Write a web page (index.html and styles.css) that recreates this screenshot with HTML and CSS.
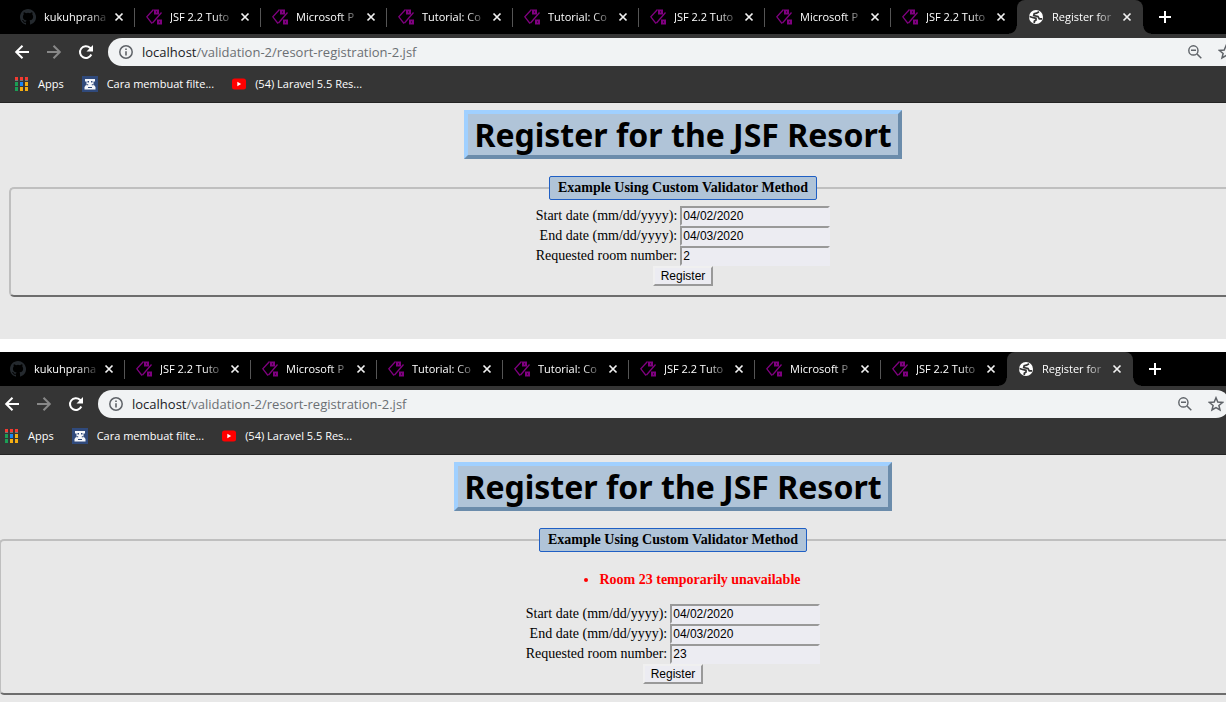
FILE: index.html
```html
<!DOCTYPE html>
<html lang="en">
<head>
<meta charset="utf-8">
<title>Register for the JSF Resort</title>
<link rel="stylesheet" href="styles.css">
</head>
<body>
<svg class="sprite" aria-hidden="true">
  <symbol id="github" viewBox="0 0 16 16"><path fill="#24292e" d="M8 0C3.58 0 0 3.58 0 8c0 3.54 2.29 6.53 5.47 7.59.4.07.55-.17.55-.38v-1.49c-2.01.37-2.53-.49-2.69-.94-.09-.23-.48-.94-.82-1.13-.28-.15-.68-.52-.01-.53.63-.01 1.08.58 1.23.82.72 1.21 1.87.87 2.33.66.07-.52.28-.87.51-1.07-1.78-.2-3.64-.89-3.64-3.95 0-.87.31-1.59.82-2.15-.08-.2-.36-1.02.08-2.12 0 0 .67-.21 2.2.82a7.5 7.5 0 0 1 4 0c1.53-1.04 2.2-.82 2.2-.82.44 1.1.16 1.92.08 2.12.51.56.82 1.27.82 2.15 0 3.07-1.87 3.75-3.65 3.95.29.25.54.73.54 1.48v2.2c0 .21.15.46.55.38A8 8 0 0 0 8 0z"/></symbol>
  <symbol id="code" viewBox="0 0 16 16"><g fill="none" stroke="#800080"><path stroke-width="1.300" d="M7.500 .5L.8 7.800L6 14.500M15.500 3.500L6.500 14"/><path stroke-width="2" d="M9 1.500h3v3H9zM12 11.500h3v3h-3z"/></g></symbol>
  <symbol id="globe" viewBox="0 0 16 16"><circle cx="8" cy="8" r="7" fill="#fff"/><path fill="none" stroke="#353535" stroke-width="1.700" d="M11 2.800L8.500 4.200 6.200 4.700 5.700 6.700 10 7.500 11.300 9.800H14M1.500 7.500L4.500 8.500 8 9.300V11L6.300 12.200V14"/></symbol>
  <symbol id="close" viewBox="0 0 10 10"><path d="M1.500 1.500l7 7m0-7l-7 7" fill="none" stroke="#f1f1f1" stroke-width="1.700"/></symbol>
  <symbol id="plus" viewBox="0 0 12 12"><path d="M6 0v12M0 6h12" fill="none" stroke="#fff" stroke-width="2"/></symbol>
  <symbol id="arrow" viewBox="0 0 16 16"><path d="M15 8H2.500M8.500 1.700L2.200 8l6.300 6.300" fill="none" stroke="currentColor" stroke-width="2"/></symbol>
  <symbol id="reload" viewBox="0 0 16 16"><path d="M13.300 10.500A5.900 5.900 0 1 1 12 3.800L13.500 5.300" fill="none" stroke="#fff" stroke-width="2"/><path d="M15 1v6.500H8.500z" fill="#fff"/></symbol>
  <symbol id="info" viewBox="0 0 14 14"><circle cx="7" cy="7" r="6.200" fill="none" stroke="#5f6368" stroke-width="1.500"/><path d="M6.200 6.200h1.600v4.300H6.200zM6.200 3.500h1.600v1.600H6.200z" fill="#5f6368"/></symbol>
  <symbol id="zoomout" viewBox="0 0 14 14"><path d="M9 9l4.300 4.300M3 5.300h5" fill="none" stroke="#5f6368" stroke-width="1.500"/><circle cx="5.400" cy="5.400" r="4.600" fill="none" stroke="#5f6368" stroke-width="1.400"/></symbol>
  <symbol id="star" viewBox="0 0 16 16"><path d="M8 1.800l1.800 4.300 4.700.4-3.600 3 1.100 4.500L8 11.600 4 14l1.100-4.500-3.600-3 4.700-.4z" fill="none" stroke="#5f6368" stroke-width="1.500"/></symbol>
  <symbol id="apps" viewBox="0 0 14 14"><path fill="#f33b31" d="M0 0h3v3H0zM5 0h3v3H5zM10 0h3v3h-3z"/><path fill="#777" d="M0 3h3v1H0zM5 3h3v1H5zM10 3h3v1h-3z"/><path fill="#1b9e55" d="M0 5h3v4H0zM0 10h3v4H0z"/><path fill="#1a86f5" d="M5 5h3v4H5z"/><path fill="#f5ae12" d="M10 5h3v4h-3zM5 10h3v4H5zM10 10h3v4h-3z"/></symbol>
  <symbol id="tower" viewBox="0 0 16 16"><path fill="#304a7c" d="M0 0h16v16H0z"/><path fill="#f4f6fa" d="M3 3h10v2.500h-1.500V9H12l1.500 2v2.500h-11V11L4 9h.5V5.500H3z"/><path fill="#304a7c" d="M5.500 5h1.500v1.500H5.500zM9 5h1.500v1.500H9zM4.500 8.300h1.700v1H4.500zM9.800 8.300h1.700v1H9.800zM6 11h4v1H6z"/></symbol>
  <symbol id="video" viewBox="0 0 14 12"><rect width="14" height="11" y=".500" rx="2.500" fill="#f00"/><path fill="#fff" d="M5.300 3.800L9.200 6 5.300 8.200z"/></symbol>
</svg>

<section class="window">
  <nav class="tabs">
    <div class="tab"><svg class="fav"><use href="#github"/></svg><span class="name">kukuhprana</span><button class="shut" aria-label="Close tab"><svg><use href="#close"/></svg></button></div>
    <div class="tab"><svg class="fav"><use href="#code"/></svg><span class="name">JSF 2.2 Tuto</span><button class="shut" aria-label="Close tab"><svg><use href="#close"/></svg></button></div>
    <div class="tab"><svg class="fav"><use href="#code"/></svg><span class="name">Microsoft P</span><button class="shut" aria-label="Close tab"><svg><use href="#close"/></svg></button></div>
    <div class="tab"><svg class="fav"><use href="#code"/></svg><span class="name">Tutorial: Co</span><button class="shut" aria-label="Close tab"><svg><use href="#close"/></svg></button></div>
    <div class="tab"><svg class="fav"><use href="#code"/></svg><span class="name">Tutorial: Co</span><button class="shut" aria-label="Close tab"><svg><use href="#close"/></svg></button></div>
    <div class="tab"><svg class="fav"><use href="#code"/></svg><span class="name">JSF 2.2 Tuto</span><button class="shut" aria-label="Close tab"><svg><use href="#close"/></svg></button></div>
    <div class="tab"><svg class="fav"><use href="#code"/></svg><span class="name">Microsoft P</span><button class="shut" aria-label="Close tab"><svg><use href="#close"/></svg></button></div>
    <div class="tab last"><svg class="fav"><use href="#code"/></svg><span class="name">JSF 2.2 Tuto</span><button class="shut" aria-label="Close tab"><svg><use href="#close"/></svg></button></div>
    <div class="tab active"><svg class="fav"><use href="#globe"/></svg><span class="name">Register for</span><button class="shut" aria-label="Close tab"><svg><use href="#close"/></svg></button></div>
    <button class="new-tab" aria-label="New tab"><svg><use href="#plus"/></svg></button>
  </nav>
  <div class="toolbar">
    <button class="tool" aria-label="Back"><svg><use href="#arrow"/></svg></button>
    <button class="tool forward" aria-label="Forward"><svg><use href="#arrow"/></svg></button>
    <button class="tool" aria-label="Reload"><svg><use href="#reload"/></svg></button>
    <div class="address"><svg class="info"><use href="#info"/></svg><span class="url"><span class="host">localhost</span>/validation-2/resort-registration-2.jsf</span><button class="action" aria-label="Zoom"><svg class="lens"><use href="#zoomout"/></svg></button><button class="action" aria-label="Bookmark"><svg><use href="#star"/></svg></button></div>
  </div>
  <nav class="bookmarks">
    <a href="#"><svg class="apps"><use href="#apps"/></svg>Apps</a>
    <a href="#"><svg><use href="#tower"/></svg>Cara membuat filte...</a>
    <a href="#"><svg class="video"><use href="#video"/></svg>(54) Laravel 5.5 Res...</a>
  </nav>
  <main class="page">
    <h1>Register for the JSF Resort</h1>
    <fieldset>
      <legend>Example Using Custom Validator Method</legend>
      <form>
        <div class="fields">
          <label for="start1">Start date (mm/dd/yyyy):</label><input id="start1" type="text" value="04/02/2020">
          <label for="end1">End date (mm/dd/yyyy):</label><input id="end1" type="text" value="04/03/2020">
          <label for="room1">Requested room number:</label><input id="room1" type="text" value="2">
        </div>
        <button class="register" type="button">Register</button>
      </form>
    </fieldset>
  </main>
</section>

<section class="window second">
  <nav class="tabs">
    <div class="tab"><svg class="fav"><use href="#github"/></svg><span class="name">kukuhprana</span><button class="shut" aria-label="Close tab"><svg><use href="#close"/></svg></button></div>
    <div class="tab"><svg class="fav"><use href="#code"/></svg><span class="name">JSF 2.2 Tuto</span><button class="shut" aria-label="Close tab"><svg><use href="#close"/></svg></button></div>
    <div class="tab"><svg class="fav"><use href="#code"/></svg><span class="name">Microsoft P</span><button class="shut" aria-label="Close tab"><svg><use href="#close"/></svg></button></div>
    <div class="tab"><svg class="fav"><use href="#code"/></svg><span class="name">Tutorial: Co</span><button class="shut" aria-label="Close tab"><svg><use href="#close"/></svg></button></div>
    <div class="tab"><svg class="fav"><use href="#code"/></svg><span class="name">Tutorial: Co</span><button class="shut" aria-label="Close tab"><svg><use href="#close"/></svg></button></div>
    <div class="tab"><svg class="fav"><use href="#code"/></svg><span class="name">JSF 2.2 Tuto</span><button class="shut" aria-label="Close tab"><svg><use href="#close"/></svg></button></div>
    <div class="tab"><svg class="fav"><use href="#code"/></svg><span class="name">Microsoft P</span><button class="shut" aria-label="Close tab"><svg><use href="#close"/></svg></button></div>
    <div class="tab last"><svg class="fav"><use href="#code"/></svg><span class="name">JSF 2.2 Tuto</span><button class="shut" aria-label="Close tab"><svg><use href="#close"/></svg></button></div>
    <div class="tab active"><svg class="fav"><use href="#globe"/></svg><span class="name">Register for</span><button class="shut" aria-label="Close tab"><svg><use href="#close"/></svg></button></div>
    <button class="new-tab" aria-label="New tab"><svg><use href="#plus"/></svg></button>
  </nav>
  <div class="toolbar">
    <button class="tool" aria-label="Back"><svg><use href="#arrow"/></svg></button>
    <button class="tool forward" aria-label="Forward"><svg><use href="#arrow"/></svg></button>
    <button class="tool" aria-label="Reload"><svg><use href="#reload"/></svg></button>
    <div class="address"><svg class="info"><use href="#info"/></svg><span class="url"><span class="host">localhost</span>/validation-2/resort-registration-2.jsf</span><button class="action" aria-label="Zoom"><svg class="lens"><use href="#zoomout"/></svg></button><button class="action" aria-label="Bookmark"><svg><use href="#star"/></svg></button></div>
  </div>
  <nav class="bookmarks">
    <a href="#"><svg class="apps"><use href="#apps"/></svg>Apps</a>
    <a href="#"><svg><use href="#tower"/></svg>Cara membuat filte...</a>
    <a href="#"><svg class="video"><use href="#video"/></svg>(54) Laravel 5.5 Res...</a>
  </nav>
  <main class="page">
    <h1>Register for the JSF Resort</h1>
    <fieldset>
      <legend>Example Using Custom Validator Method</legend>
      <form>
        <ul class="messages"><li>Room 23 temporarily unavailable</li></ul>
        <div class="fields">
          <label for="start2">Start date (mm/dd/yyyy):</label><input id="start2" type="text" value="04/02/2020">
          <label for="end2">End date (mm/dd/yyyy):</label><input id="end2" type="text" value="04/03/2020">
          <label for="room2">Requested room number:</label><input id="room2" type="text" value="23">
        </div>
        <button class="register" type="button">Register</button>
      </form>
    </fieldset>
  </main>
</section>
</body>
</html>
```
FILE: styles.css
```css
* { box-sizing: border-box; }

body {
  margin: 0;
  overflow: hidden;
  background: #fff;
  font: 11px/16px "Open Sans", sans-serif;
}

.sprite { display: none; }

svg { display: block; flex: none; width: 16px; height: 16px; }

button { padding: 0; border: 0; background: none; flex: none; }

/* Each window runs past the right edge of the view. */
.window { width: calc(100% + 140px); margin-bottom: 13px; }
.second { margin-left: -10px; margin-bottom: 0; }

.tabs {
  display: flex;
  align-items: stretch;
  height: 34px;
  padding-left: 9px;
  background: #000;
}

.tab {
  position: relative;
  display: flex;
  align-items: center;
  flex: none;
  width: 126px;
  padding: 0 9px 0 11px;
  color: #fff;
}

.tab::after {
  content: "";
  position: absolute;
  right: 0;
  top: 8px;
  width: 1px;
  height: 19px;
  background: #555;
}

.last::after { display: none; }

/* Tab titles fade out before the close button. */
.name {
  width: 62px;
  margin-left: 8px;
  white-space: nowrap;
  -webkit-mask-image: linear-gradient(to right, #000 44px, transparent 66px);
  mask-image: linear-gradient(to right, #000 44px, transparent 66px);
}

.shut { margin-left: 8px; }
.shut svg { width: 10px; height: 10px; }

.active { background: #353535; border-radius: 8px 8px 0 0; }

.active::before,
.active::after {
  content: "";
  position: absolute;
  top: auto;
  bottom: 0;
  width: 8px;
  height: 8px;
}

.active::before { left: -8px; background: radial-gradient(circle at 0 0, #000 7px, #353535 8px); }
.active::after { right: -8px; background: radial-gradient(circle at 100% 0, #000 7px, #353535 8px); }

.new-tab { margin-left: 16px; }
.new-tab svg { width: 12px; height: 12px; }

.toolbar {
  display: flex;
  align-items: center;
  gap: 16px;
  height: 36px;
  padding: 0 62px 0 14px;
  background: #353535;
}

.tool { color: #fff; }
.forward { color: #888; }
.forward svg { transform: rotate(180deg); }

.address {
  display: flex;
  align-items: center;
  flex: 1;
  height: 28px;
  margin-left: -2px;
  padding: 0 70px 0 11px;
  border-radius: 14px;
  background: #f1f3f4;
}

.second .toolbar { padding-right: 126px; }
.second .address { padding-right: 6px; }

.info { width: 14px; height: 14px; }

.url {
  flex: 1;
  margin-left: 9px;
  font-size: 13px;
  line-height: 20px;
  color: #6b6f73;
}

.host { color: #202124; }

.action { margin-left: 16px; }
.lens { width: 14px; height: 14px; }

.bookmarks {
  display: flex;
  align-items: center;
  gap: 18px;
  height: 33px;
  padding: 0 15px 4px;
  border-bottom: 1px solid #242424;
  background: #353535;
}

.bookmarks a {
  display: flex;
  align-items: center;
  gap: 9px;
  color: #fff;
  text-decoration: none;
}

.apps { width: 14px; height: 14px; }
.video { width: 14px; height: 12px; }

.page {
  display: flow-root;
  padding: 7px 9px 42px;
  background: #e8e8e8;
  font: 14px/20px "Liberation Serif", serif;
  color: #000;
}

h1 {
  width: fit-content;
  margin: 0 auto 17px;
  padding: 0 6px;
  border: 4px solid;
  border-color: #a0d0ff #6b8cab #6b8cab #a0d0ff;
  background: #b0c4d8;
  font: bold 32px/41px "Noto Sans", sans-serif;
}

fieldset {
  min-width: 0;
  margin: 0;
  padding: 6px 10px 9px;
  border: 2px solid;
  border-color: #bfbfbf #6d6d6d #6d6d6d #bfbfbf;
  border-radius: 5px;
}

legend {
  margin: 0 auto;
  padding: 0 8px;
  border: 1px solid #1f5fc4;
  border-radius: 2px;
  background: #b0c4d8;
  font-weight: bold;
  line-height: 22px;
}

form { display: flex; flex-direction: column; align-items: center; }

.messages {
  margin: 12px 0 14px;
  padding-left: 54px;
  color: #f00;
  font-weight: bold;
}

.fields {
  display: grid;
  grid-template-columns: auto 150px;
  column-gap: 3px;
  text-align: right;
}

.fields input {
  width: 100%;
  height: 20px;
  padding: 0 1px;
  border: 2px solid;
  border-color: #999 #ececf2 #ececf2 #999;
  border-radius: 0;
  background: #ececf2;
  font: 12px "Liberation Sans", sans-serif;
}

.register {
  height: 20px;
  padding: 0 6px;
  border: 2px solid;
  border-color: #f0f0f0 #999 #999 #f0f0f0;
  background: #ececf2;
  font: 12px "Liberation Sans", sans-serif;
}

.second .page { padding-bottom: 8px; }
```
